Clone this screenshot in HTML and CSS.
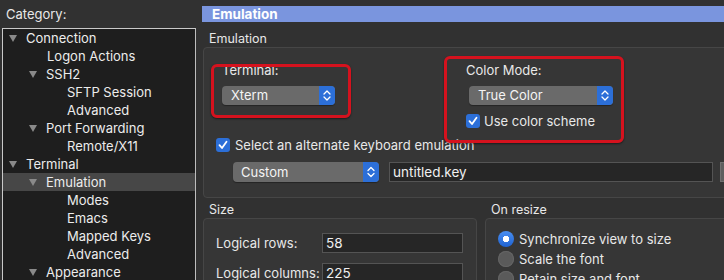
FILE: index.html
```html
<!DOCTYPE html>
<html lang="en">
<head>
  <meta charset="UTF-8" />
  <title>Session Options</title>
  <link rel="stylesheet" href="styles.css">
</head>
<body>
  <div class="window">
    <aside class="sidebar">
      <div class="cat-label">Category:</div>
      <ul class="tree">
        <li class="lvl0"><span class="tri"></span>Connection</li>
        <li class="lvl1">Logon Actions</li>
        <li class="lvl1 node"><span class="tri"></span>SSH2</li>
        <li class="lvl2">SFTP Session</li>
        <li class="lvl2">Advanced</li>
        <li class="lvl1 node"><span class="tri"></span>Port Forwarding</li>
        <li class="lvl2">Remote/X11</li>
        <li class="lvl0"><span class="tri"></span>Terminal</li>
        <li class="lvl1 node selected"><span class="tri"></span>Emulation</li>
        <li class="lvl2">Modes</li>
        <li class="lvl2">Emacs</li>
        <li class="lvl2">Mapped Keys</li>
        <li class="lvl2">Advanced</li>
        <li class="lvl1 node"><span class="tri"></span>Appearance</li>
      </ul>
    </aside>

    <main class="panel">
      <div class="panel-title">Emulation</div>

      <div class="group-label">Emulation</div>
      <div class="group emu">
        <div class="emu-top">
          <div class="col-term">
            <div class="field-label">Terminal:</div>
            <div class="popup popup-term">
              <span class="popup-text">Xterm</span>
              <span class="arrows"><svg width="16" height="19" viewBox="0 0 16 19"><path d="M5 8 L8 5 L11 8 M5 11 L8 14 L11 11" fill="none" stroke="#fff" stroke-width="1.3" stroke-linecap="round" stroke-linejoin="round"/></svg></span>
            </div>
          </div>
          <div class="col-color">
            <div class="field-label">Color Mode:</div>
            <div class="popup popup-color">
              <span class="popup-text">True Color</span>
              <span class="arrows"><svg width="16" height="19" viewBox="0 0 16 19"><path d="M5 8 L8 5 L11 8 M5 11 L8 14 L11 11" fill="none" stroke="#fff" stroke-width="1.3" stroke-linecap="round" stroke-linejoin="round"/></svg></span>
            </div>
            <div class="check-row scheme-row">
              <span class="check"><svg width="14" height="14" viewBox="0 0 14 14"><path d="M3.5 7.2 L6 10 L10.5 3.8" fill="none" stroke="#fff" stroke-width="1.8" stroke-linecap="round" stroke-linejoin="round"/></svg></span>
              <span>Use color scheme</span>
            </div>
          </div>
        </div>

        <div class="check-row alt-row">
          <span class="check"><svg width="14" height="14" viewBox="0 0 14 14"><path d="M3.5 7.2 L6 10 L10.5 3.8" fill="none" stroke="#fff" stroke-width="1.8" stroke-linecap="round" stroke-linejoin="round"/></svg></span>
          <span>Select an alternate keyboard emulation</span>
        </div>

        <div class="keymap-row">
          <div class="popup popup-custom">
            <span class="popup-text">Custom</span>
            <span class="arrows"><svg width="16" height="20" viewBox="0 0 16 20"><path d="M5 8.5 L8 5.5 L11 8.5 M5 11.5 L8 14.5 L11 11.5" fill="none" stroke="#fff" stroke-width="1.3" stroke-linecap="round" stroke-linejoin="round"/></svg></span>
          </div>
          <div class="textfield keyfile">untitled.key</div>
          <div class="btn-stub"></div>
        </div>
      </div>

      <div class="lower">
        <div class="size-col">
          <div class="group-label">Size</div>
          <div class="group size">
            <div class="size-row">
              <span class="size-label">Logical rows:</span>
              <div class="textfield num">58</div>
            </div>
            <div class="size-row">
              <span class="size-label">Logical columns:</span>
              <div class="textfield num">225</div>
            </div>
          </div>
        </div>
        <div class="resize-col">
          <div class="group-label">On resize</div>
          <div class="group resize">
            <div class="radio-row"><span class="radio on"></span>Synchronize view to size</div>
            <div class="radio-row"><span class="radio"></span>Scale the font</div>
            <div class="radio-row"><span class="radio"></span>Retain size and font</div>
          </div>
        </div>
      </div>
    </main>
  </div>

  <!-- Markierungen -->
  <div class="mark mark-term"></div>
  <div class="mark mark-color"></div>
</body>
</html>
```

FILE: styles.css
```css
body {
  margin: 0;
  padding: 0;
  background: #313131;
  color: #e8e8e8;
  font-family: Inter, 'Liberation Sans', sans-serif;
  font-size: 13px;
  width: 724px;
  height: 280px;
  overflow: hidden;
  position: relative;
}

.window {
  display: flex;
  height: 280px;
}

/* Seitenleiste */
.sidebar {
  width: 194px;
  flex: none;
  padding-left: 2px;
}

.cat-label {
  padding: 6px 0 0 4px;
  line-height: 16px;
  margin-bottom: 6px;
}

.tree {
  list-style: none;
  margin: 0;
  padding: 0;
  height: 300px;
  background: #1e1e1e;
  border: 1px solid #c9c9c9;
  border-right-color: #bdbdbd;
}

.tree li {
  display: flex;
  align-items: center;
  height: 18px;
  color: #ececec;
  white-space: nowrap;
}

.tree .lvl0 { padding-left: 6px; }
.tree .lvl1 { padding-left: 44px; }
.tree .lvl1.node { padding-left: 26px; }
.tree .lvl2 { padding-left: 64px; }

.tree .selected {
  background: #474747;
}

.tri {
  width: 0;
  height: 0;
  border-left: 4.5px solid transparent;
  border-right: 4.5px solid transparent;
  border-top: 7px solid #8a8a8a;
  margin-right: 9px;
}

/* Hauptbereich */
.panel {
  flex: 1;
  margin-left: 6px;
  padding-top: 6px;
  overflow: hidden;
}

.panel-title {
  height: 16px;
  line-height: 16px;
  background: #7a95de;
  color: #fff;
  font-weight: bold;
  font-size: 13.5px;
  padding-left: 10px;
}

.group-label {
  line-height: 14px;
  margin: 10px 0 1px 7px;
  font-size: 12.5px;
  color: #e8e8e8;
}

.group {
  background: #363636;
  border: 1px solid #464646;
  border-radius: 4px;
  margin-left: 1px;
}

.emu {
  width: 560px;
  padding: 14px 0 15px 12px;
}

.emu-top {
  display: flex;
  padding-left: 6px;
}

.col-term {
  width: 244px;
  flex: none;
}

.field-label {
  line-height: 16px;
}

.popup {
  display: flex;
  justify-content: space-between;
  height: 19px;
  background: #6a6a6a;
  border-radius: 4px;
  margin-top: 8px;
  color: #f4f4f4;
  box-shadow: 0 1px 1px rgba(0, 0, 0, 0.35);
  flex: none;
}

.popup-text {
  line-height: 19px;
  padding-left: 9px;
}

.arrows {
  width: 16px;
  background: #2c6fd8;
  border-radius: 0 4px 4px 0;
  display: flex;
}

.popup-term { width: 113px; }
.popup-color { width: 144px; margin-left: 3px; }

.popup-custom {
  width: 146px;
  height: 20px;
  margin-top: 0;
}
.popup-custom .popup-text { line-height: 20px; padding-left: 8px; }

.check-row {
  display: flex;
  align-items: center;
  height: 16px;
}

.check {
  width: 14px;
  height: 14px;
  border-radius: 3px;
  background: #2c6fd8;
  display: flex;
  margin-right: 4px;
}

.scheme-row { margin-top: 8px; }

.alt-row { margin-top: 8px; }
.alt-row .check { margin-right: 5px; }

.keymap-row {
  display: flex;
  margin-top: 9px;
  padding-left: 17px;
}

.textfield {
  box-sizing: border-box;
  height: 20px;
  line-height: 18px;
  background: #262626;
  border: 1px solid #545454;
  padding-left: 3px;
  color: #f0f0f0;
  font-size: 13.5px;
  flex: none;
}

.keyfile {
  width: 324px;
  margin-left: 10px;
}

.btn-stub {
  width: 60px;
  height: 20px;
  margin-left: 7px;
  background: #5e5e5e;
  border: 1px solid #707070;
  box-sizing: border-box;
  flex: none;
}

.lower {
  display: flex;
  gap: 7px;
}

.size-col {
  width: 275px;
  flex: none;
}

.group-label:first-child {
  margin-top: 5px;
}

.size {
  height: 80px;
  padding: 14px 0 0 12px;
}

.size-row {
  display: flex;
  align-items: center;
  margin-bottom: 10px;
}

.size-label {
  width: 106px;
  flex: none;
}

.num {
  width: 141px;
}

.resize-col {
  width: 300px;
  flex: none;
}

.resize {
  height: 80px;
  padding: 10px 0 0 12px;
}

.radio-row {
  display: flex;
  align-items: center;
  height: 20px;
}

.radio {
  width: 16px;
  height: 16px;
  border-radius: 50%;
  background: #5a5a5a;
  margin-right: 5px;
  box-sizing: border-box;
  box-shadow: inset 0 0 0 1px #646464;
  flex: none;
}

.radio.on {
  background: radial-gradient(circle, #fff 0 3px, transparent 3.5px), linear-gradient(#4a8ff2, #1f62d0);
  box-shadow: none;
}

/* rote Markierungen */
.mark {
  position: absolute;
  box-sizing: border-box;
  border: 3px solid #d5121e;
  border-radius: 6px;
  box-shadow: 0 1px 2px rgba(0, 0, 0, 0.5);
}

.mark-term {
  left: 211px;
  top: 64px;
  width: 140px;
  height: 54px;
}

.mark-color {
  left: 444px;
  top: 56px;
  width: 180px;
  height: 87px;
}
```
